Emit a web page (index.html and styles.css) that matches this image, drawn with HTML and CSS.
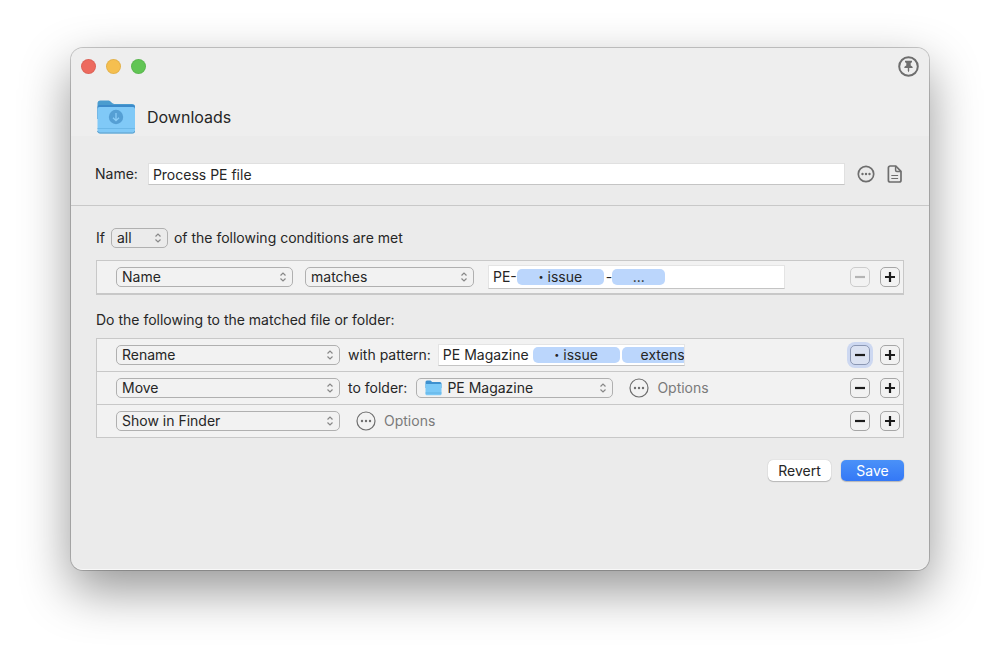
FILE: index.html
```
<!doctype html>
<html lang="en">
<head>
    <meta charset="utf-8">
    <title>Downloads</title>
    <meta name="viewport" content="width=device-width, initial-scale=1">
    <link rel="stylesheet" href="styles.css">
</head>

<body>
<!-- Icons that are used more than once -->
<svg class="symbols" aria-hidden="true">
    <symbol id="more" viewBox="0 0 20 20">
        <circle cx="10" cy="10" r="9" fill="none" stroke="currentColor" stroke-width="1.2"/>
        <circle cx="6" cy="10" r="1.2" fill="currentColor"/>
        <circle cx="10" cy="10" r="1.2" fill="currentColor"/>
        <circle cx="14" cy="10" r="1.2" fill="currentColor"/>
    </symbol>
    <symbol id="plus" viewBox="0 0 18 18">
        <path d="M4 9h10M9 4v10" fill="none" stroke="currentColor" stroke-width="2.2"/>
    </symbol>
    <symbol id="minus" viewBox="0 0 18 18">
        <path d="M4 9h10" fill="none" stroke="currentColor" stroke-width="2.2"/>
    </symbol>
</svg>

<main class="window">
    <header class="header">
        <div class="titlebar">
            <div class="lights">
                <button class="light close" aria-label="Close"></button>
                <button class="light minimize" aria-label="Minimize"></button>
                <button class="light zoom" aria-label="Zoom"></button>
            </div>
            <button class="icon-button" aria-label="Keep on top">
                <svg width="21" height="21" viewBox="0 0 21 21">
                    <circle cx="10.5" cy="10.5" r="9.3" fill="none" stroke="currentColor" stroke-width="2"/>
                    <path d="M7 4.800h7v1.500l-1.300.7v2.600c1.300.4 2 1.200 2 2.400h-3.500v2.900l-.7 1.400-.7-1.400V12H6.300c0-1.200.7-2 2-2.400V7L7 6.300z" fill="currentColor"/>
                </svg>
            </button>
        </div>
        <div class="folder">
            <svg width="38" height="36" viewBox="0 0 38 36" aria-hidden="true">
                <path d="M.5 4.500a3 3 0 0 1 3-3h7.500c1.500 0 2 .5 3 1.500l1.500 1.300c.7.600 1.300.7 2 .7H35a3 3 0 0 1 3 3V20H.5z" fill="#4a9ccf"/>
                <path d="M.5 8a2 2 0 0 1 2-2h33.500a2 2 0 0 1 2 2v12H.5z" fill="#3c8aca"/>
                <path d="M.5 10a2 2 0 0 1 2-2h33.500a2 2 0 0 1 2 2v22a2.500 2.500 0 0 1-2.500 2.500H3A2.500 2.500 0 0 1 .5 32z" fill="#80c9f7"/>
                <path d="M.5 29.500H38" stroke="#6cb8e8"/>
                <path d="M.5 32a2.500 2.500 0 0 0 2.500 2h32.500a2.500 2.500 0 0 0 2.500-2" fill="none" stroke="#5c9dc8"/>
                <circle cx="19" cy="18" r="7.2" fill="#559fd4"/>
                <path d="M19 14v7.500M16 18.700l3 3 3-3" fill="none" stroke="#8bcdf7" stroke-width="1.3"/>
            </svg>
            <h1>Downloads</h1>
        </div>
    </header>

    <form>
        <div class="rule-name">
            <label for="name">Name:</label>
            <input id="name" type="text" value="Process PE file">
            <div class="rule-icons">
                <button type="button" class="icon-button" aria-label="More">
                    <svg width="18" height="18" viewBox="0 0 18 18">
                        <circle cx="9" cy="9" r="7.7" fill="none" stroke="currentColor" stroke-width="1.7"/>
                        <circle cx="5.5" cy="9" r="1.2" fill="currentColor"/>
                        <circle cx="9" cy="9" r="1.2" fill="currentColor"/>
                        <circle cx="12.5" cy="9" r="1.2" fill="currentColor"/>
                    </svg>
                </button>
                <button type="button" class="icon-button" aria-label="Notes">
                    <svg width="16" height="18" viewBox="0 0 16 18" fill="none" stroke="currentColor" stroke-width="1.7">
                        <path d="M3.200 1h5.600L14 6.300v8.900A1.800 1.800 0 0 1 12.200 17h-9a1.800 1.800 0 0 1-1.800-1.800V2.800A1.800 1.800 0 0 1 3.200 1z"/>
                        <path d="M8.600 1v4.300a1.200 1.200 0 0 0 1.200 1.200H14" stroke-width="1.5"/>
                        <path d="M4.300 10.500h6.800M4.300 13.500h6.800" stroke-width="1.2"/>
                    </svg>
                </button>
            </div>
        </div>

        <div class="rules">
            <div class="sentence">
                <label for="match">If</label>
                <select id="match" class="match"><option>all</option></select>
                <span>of the following conditions are met</span>
            </div>

            <div class="list conditions">
                <div class="row">
                    <select class="attribute" aria-label="Attribute"><option>Name</option></select>
                    <select class="operator" aria-label="Operator"><option>matches</option></select>
                    <div class="tokens" role="textbox" contenteditable="true" spellcheck="false" aria-label="Match pattern">PE-<span class="token"><small>•</small> issue</span>-<span class="token short">...</span></div>
                    <div class="row-buttons">
                        <button type="button" class="square" aria-label="Remove condition" disabled><svg><use href="#minus"/></svg></button>
                        <button type="button" class="square" aria-label="Add condition"><svg><use href="#plus"/></svg></button>
                    </div>
                </div>
            </div>

            <p>Do the following to the matched file or folder:</p>

            <div class="list">
                <div class="row">
                    <select class="action" aria-label="First action"><option>Rename</option></select>
                    <span class="caption">with pattern:</span>
                    <div class="tokens rename" role="textbox" contenteditable="true" spellcheck="false" aria-label="Rename pattern">PE Magazine <span class="token"><small>•</small> issue</span><span class="token cut">extens</span></div>
                    <div class="row-buttons">
                        <button type="button" class="square focused" aria-label="Remove rename"><svg><use href="#minus"/></svg></button>
                        <button type="button" class="square" aria-label="Add action"><svg><use href="#plus"/></svg></button>
                    </div>
                </div>
                <div class="row">
                    <select class="action" aria-label="Second action"><option>Move</option></select>
                    <label class="caption" for="target">to folder:</label>
                    <div class="target">
                        <svg width="17" height="16" viewBox="0 0 17 16" aria-hidden="true">
                            <path d="M.5 2a1.500 1.500 0 0 1 1.500-1.500h3.500L7.200 2H15A1.500 1.500 0 0 1 16.500 3.500V8H.5z" fill="#3e91cf"/>
                            <path d="M.5 4h16v10a1.200 1.200 0 0 1-1.200 1.200H1.700A1.200 1.200 0 0 1 .5 14z" fill="#7bc9f7"/>
                            <path d="M.5 13h16" stroke="#63b2e3"/>
                        </svg>
                        <select id="target"><option>PE Magazine</option></select>
                    </div>
                    <button type="button" class="options"><svg><use href="#more"/></svg>Options</button>
                    <div class="row-buttons">
                        <button type="button" class="square" aria-label="Remove move"><svg><use href="#minus"/></svg></button>
                        <button type="button" class="square" aria-label="Add action"><svg><use href="#plus"/></svg></button>
                    </div>
                </div>
                <div class="row">
                    <select class="action" aria-label="Third action"><option>Show in Finder</option></select>
                    <button type="button" class="options"><svg><use href="#more"/></svg>Options</button>
                    <div class="row-buttons">
                        <button type="button" class="square" aria-label="Remove show in Finder"><svg><use href="#minus"/></svg></button>
                        <button type="button" class="square" aria-label="Add action"><svg><use href="#plus"/></svg></button>
                    </div>
                </div>
            </div>

            <div class="footer">
                <button type="reset" class="push">Revert</button>
                <button type="submit" class="push primary">Save</button>
            </div>
        </div>
    </form>
</main>
</body>
</html>
```

FILE: styles.css
```
* {
    box-sizing: border-box;
}

body {
    margin: 0;
    padding: 48px 71px 94px;
    min-height: 100vh;
    display: flex;
    background: #fff;
    color: #262626;
    font-family: Inter, "Liberation Sans", sans-serif;
    font-size: 14px;
    line-height: 20px;
}

button, input, select {
    font: inherit;
    color: inherit;
    margin: 0;
}

button {
    padding: 0;
    border: 0;
    background: none;
}

.symbols {
    display: none;
}

.window {
    flex: 1;
    min-width: 0;
    background: #ebebeb;
    border-bottom: 1px solid #f8f8f8;
    border-radius: 12px;
    overflow: hidden;
    box-shadow: 0 0 0 1px #0003, 0 20px 50px #0000006b;
}

/* Title bar */
.header {
    background: #eee;
}

.titlebar {
    display: flex;
    align-items: center;
    justify-content: space-between;
    padding: 8px 10px 0;
}

.lights {
    display: flex;
    gap: 10px;
}

.light {
    width: 15px;
    height: 15px;
    border-radius: 50%;
    border: 1px solid #0001;
}

.close {
    background: #ed6a5e;
}

.minimize {
    background: #f5bf4f;
}

.zoom {
    background: #61c554;
}

.icon-button {
    color: #6e6e6e;
    display: flex;
}

.folder {
    display: flex;
    align-items: center;
    gap: 12px;
    padding: 22px 26px 1px;
}

h1 {
    margin: 0;
    font-size: 16px;
    font-weight: normal;
}

/* Name of the rule */
.rule-name {
    display: flex;
    align-items: center;
    gap: 10px;
    padding: 27px 26px 20px 24px;
    border-bottom: 1px solid #c8c8c8;
}

.rule-name input {
    flex: 1;
    min-width: 0;
    height: 22px;
    padding: 0 4px;
    border: 1px solid #e0e0e0;
    border-bottom-color: #c4c4c4;
    background: #fff;
}

.rule-icons {
    display: flex;
    gap: 12px;
    padding-left: 2px;
}

/* Conditions and actions */
.rules {
    padding: 22px 25px;
}

.sentence {
    display: flex;
    align-items: center;
    gap: 6px;
}

select {
    appearance: none;
    height: 20px;
    padding: 0 20px 0 5px;
    border: 1px solid #b0b0b0;
    border-radius: 5px;
    line-height: 18px;
    background: url("data:image/svg+xml,%3Csvg xmlns='http://www.w3.org/2000/svg' width='8' height='12' fill='none' stroke='%23888' stroke-width='1.2'%3E%3Cpath d='M1.500 4.500L4 2l2.500 2.500M1.500 7.500L4 10l2.500-2.500'/%3E%3C/svg%3E") no-repeat right 5px center;
}

.match {
    width: 57px;
}

.attribute {
    width: 177px;
}

.operator {
    width: 169px;
    margin-left: 12px;
}

.action {
    width: 224px;
}

.list {
    border: 1px solid #c8c8c8;
    background: #f2f2f2;
}

.conditions {
    margin-top: 12px;
    border-bottom-width: 2px;
}

.row {
    display: flex;
    align-items: center;
    height: 32px;
    padding: 0 3px 0 19px;
}

.row + .row {
    height: 33px;
    border-top: 1px solid #c8c8c8;
}

p {
    margin: 15px 0 8px;
}

.caption {
    margin-left: 8px;
}

.tokens {
    flex: 0 1 297px;
    height: 24px;
    margin-left: 14px;
    padding: 1px 4px;
    border: 1px solid #e4e4e4;
    border-bottom-color: #c4c4c4;
    background: #fff;
    white-space: nowrap;
    overflow: hidden;
}

.rename {
    flex-basis: 247px;
    height: 22px;
    margin-left: 7px;
    padding: 0 0 0 4px;
}

.token {
    display: inline-block;
    width: 87px;
    height: 16px;
    margin-right: 2px;
    border-radius: 5px;
    background: #bbd6fc;
    line-height: 16px;
    text-align: center;
}

.token small {
    display: inline-block;
    font-size: 9px;
    vertical-align: top;
}

.short {
    width: 53px;
}

.cut {
    width: 90px;
    padding-left: 19px;
    text-align: left;
}

.target {
    position: relative;
    margin-left: 9px;
}

.target svg {
    position: absolute;
    left: 9px;
    top: 2px;
}

.target select {
    width: 197px;
    padding-left: 30px;
}

.options {
    display: flex;
    align-items: center;
    gap: 8px;
    margin-left: 16px;
    color: #7a7a7a;
}

.options svg {
    width: 20px;
    height: 20px;
    color: #6e6e6e;
}

.row-buttons {
    display: flex;
    gap: 10px;
    margin-left: auto;
}

.square {
    width: 20px;
    height: 20px;
    border: 1px solid #a6a6a6;
    border-radius: 5px;
    color: #1c1c1c;
}

.square svg {
    display: block;
    width: 18px;
    height: 18px;
}

.square:disabled {
    border-color: #ccc;
    color: #b4b4b4;
}

.focused {
    border-color: #8b97b3;
    background: #dbe2f2;
    box-shadow: 0 0 0 3px #cdd8f1;
}

/* Revert and save */
.footer {
    display: flex;
    justify-content: flex-end;
    gap: 10px;
    margin-top: 22px;
}

.push {
    width: 63px;
    height: 21px;
    border-radius: 5px;
    background: #fff;
    box-shadow: 0 0 1px #0004, 0 1px 1px #0003;
}

.primary {
    background: linear-gradient(#4a91f8, #3478f6);
    color: #fff;
}
```
